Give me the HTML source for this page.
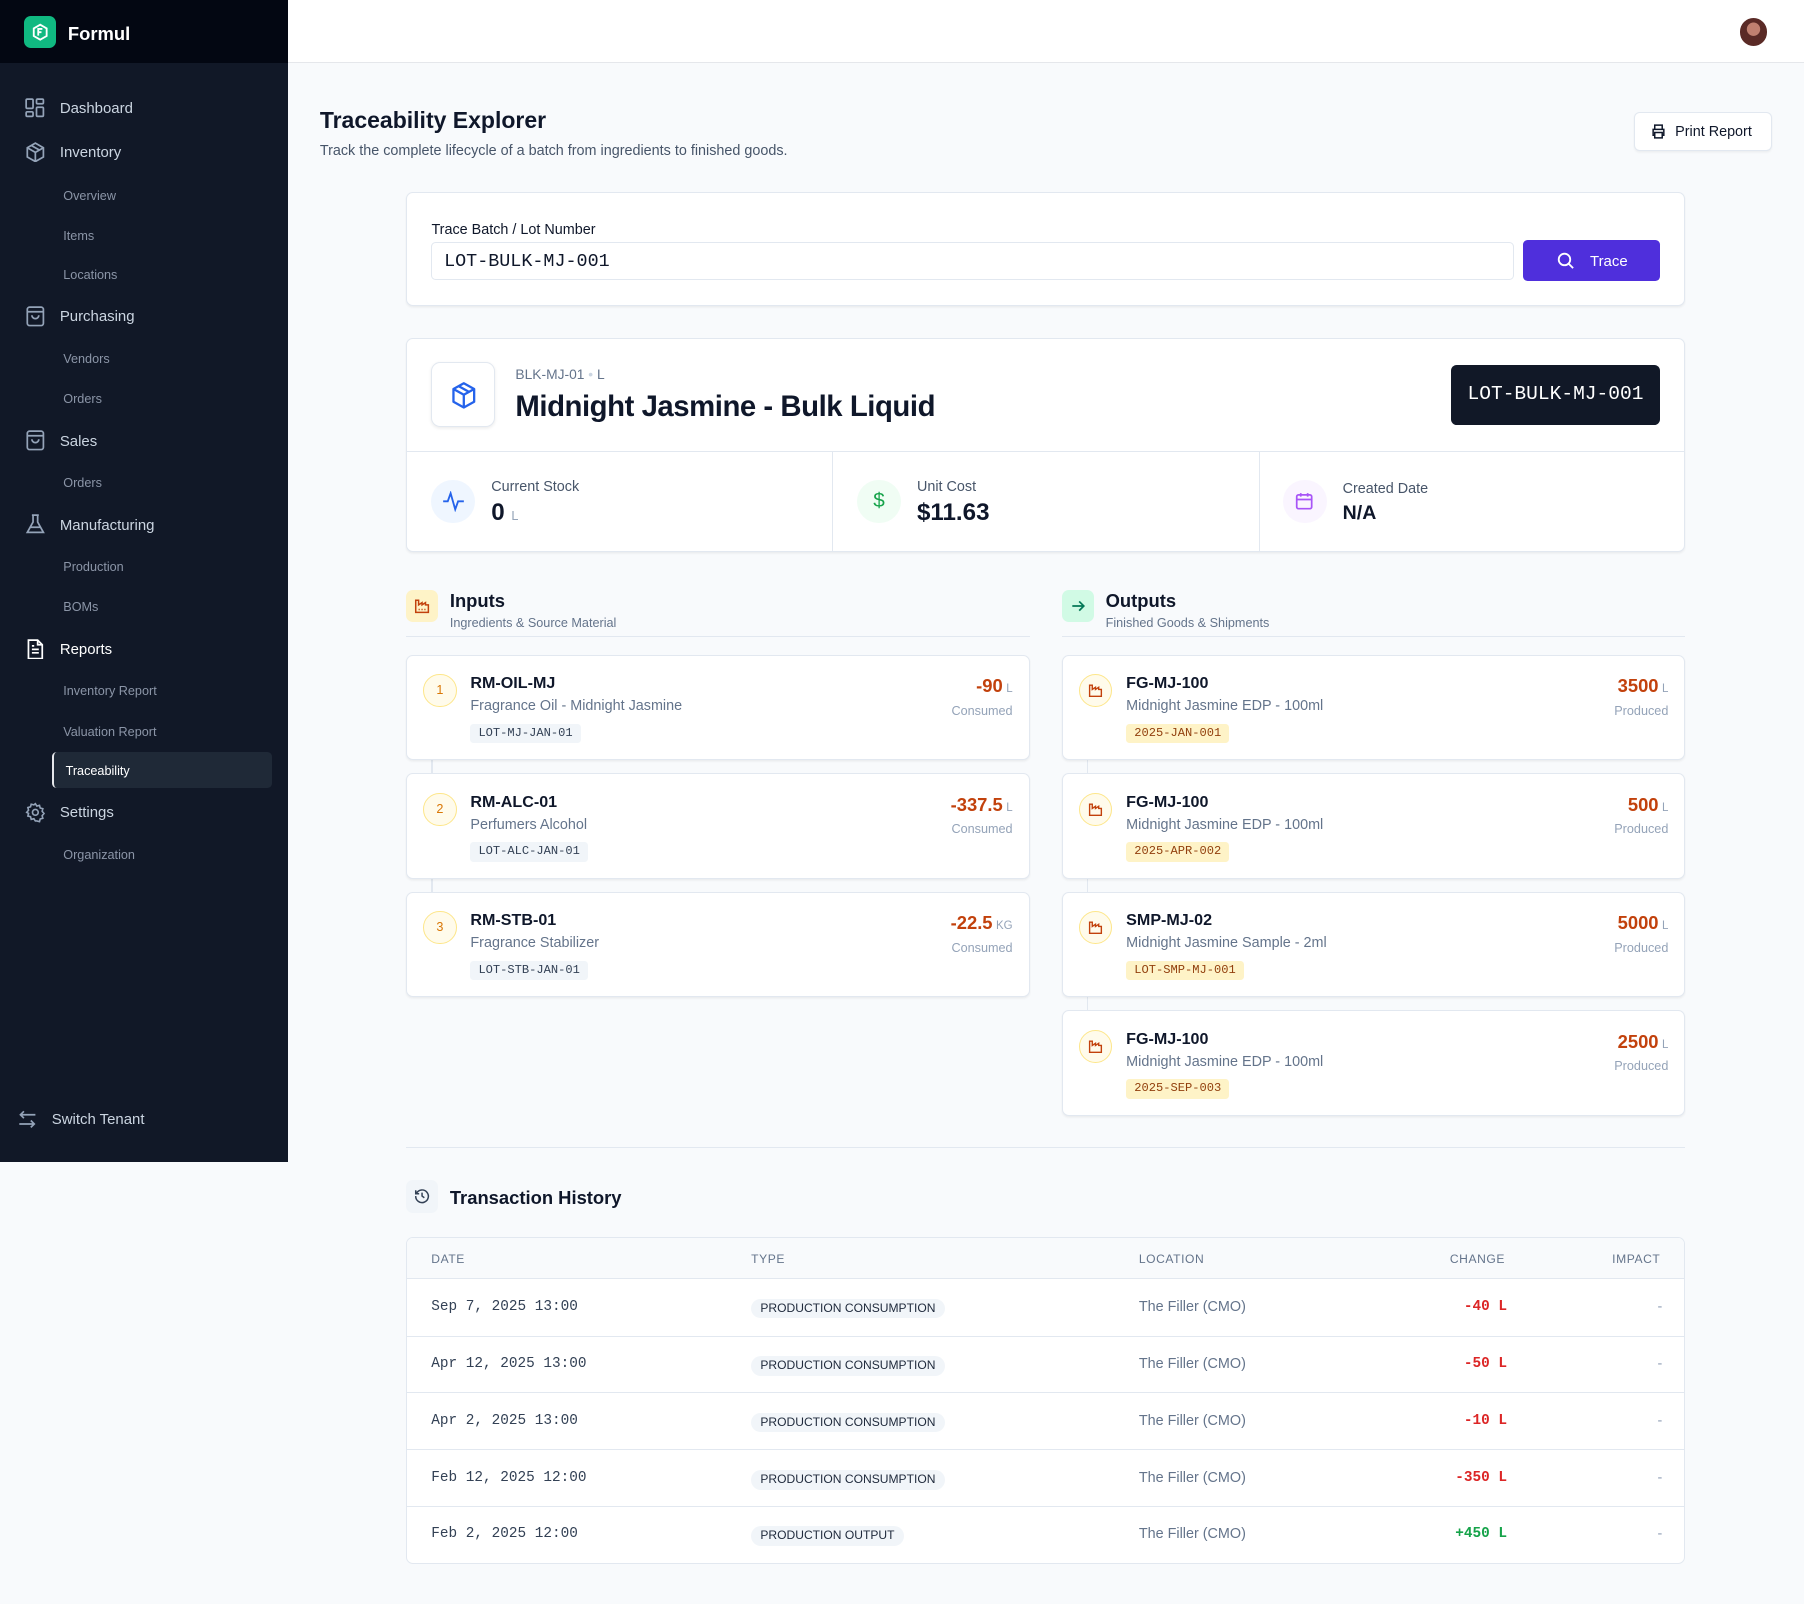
<!DOCTYPE html>
<html><head><meta charset="utf-8"><style>
*{box-sizing:border-box;margin:0;padding:0}
html,body{width:1804px;height:1604px;overflow:hidden;background:#f8fafc}
#root{zoom:1.15051;position:relative;width:1568px;height:1394px;font-family:"Liberation Sans",sans-serif;color:#0f172a;background:#f8fafc}
.a{position:absolute;white-space:nowrap}
.mono{font-family:"Liberation Mono",monospace}
.sb{position:absolute;left:0;top:0;width:250px;height:1010px;background:#111827}
.sbt{position:absolute;left:0;top:0;width:250px;height:55px;background:#030712}
.nav{position:absolute;left:52px;font-size:13px;color:#cbd5e1;line-height:16px}
.sub{position:absolute;left:55px;font-size:11px;color:#8b95a7;line-height:14px}
.ic{position:absolute;left:22px;width:18px;height:18px}
.card{position:absolute;background:#fff;border:1px solid #e2e8f0;border-radius:6px;box-shadow:0 1px 2px rgba(0,0,0,.06)}
.num{position:absolute;left:14px;top:16px;width:29px;height:29px;border-radius:50%;background:#fffbeb;border:1px solid #fde68a;color:#d97706;font-size:11px;text-align:center;line-height:27px}
.code{position:absolute;left:55px;top:16px;font-size:14px;font-weight:bold;color:#0f172a}
.nm{position:absolute;left:55px;top:37px;font-size:12.5px;color:#64748b}
.lot{position:absolute;left:55px;top:59px;height:17px;padding:0 7px;border-radius:3px;background:#f1f5f9;font-size:10.5px;line-height:17px;color:#334155;font-family:"Liberation Mono",monospace}
.lot.y{background:#fef3c7;color:#92400e}
.qty{position:absolute;right:14px;top:17px;font-size:16px;font-weight:bold;color:#c2410c}
.qty span{font-size:10px;font-weight:normal;color:#94a3b8;margin-left:3px}
.st{position:absolute;right:14px;top:42px;font-size:11px;color:#94a3b8}
.vl{position:absolute;width:1px;background:#e2e8f0}
.row{position:absolute;left:0;width:1112px;height:50px;border-top:1px solid #e2e8f0;font-size:12.5px}
.row .d{position:absolute;left:21px;top:17px;font-family:"Liberation Mono",monospace;color:#334155;font-size:12.5px}
.row .t{position:absolute;left:299px;top:17px;height:17px;padding:0 8px;border-radius:9px;background:#f1f5f9;font-size:10.5px;line-height:17px;color:#1e293b}
.row .l{position:absolute;left:636px;top:17px;color:#64748b}
.row .c{position:absolute;right:156px;top:17px;font-family:"Liberation Mono",monospace;font-weight:bold;color:#dc2626}
.row .i{position:absolute;right:21px;top:17px;color:#94a3b8}
.th{position:absolute;top:12px;font-size:10.5px;color:#64748b;letter-spacing:.5px}
</style></head><body><div id="root">

<div class="sb"></div><div class="sbt"></div>
<div class="a" style="left:21px;top:14px;width:28px;height:28px;border-radius:6px;background:#10b981"></div>
<svg class="a" style="left:27px;top:20px" width="16" height="16" viewBox="0 0 16 16" fill="none" stroke="#fff" stroke-width="1.6"><path d="M8 1.5l5.6 3.2v6.6L8 14.5l-5.6-3.2V4.7z"/><path d="M6.3 11V5.2h3.6M6.3 8h2.8"/></svg>
<div class="a" style="left:59px;top:20px;font-size:16px;font-weight:bold;color:#fff">Formul</div>

<svg class="ic" style="top:85px" viewBox="0 0 18 18" fill="none" stroke="#94a3b8" stroke-width="1.5"><rect x="1" y="1" width="6" height="8" rx="1"/><rect x="10" y="1" width="6" height="4" rx="1"/><rect x="10" y="8" width="6" height="8" rx="1"/><rect x="1" y="12" width="6" height="4" rx="1"/></svg>
<div class="nav" style="top:87px">Dashboard</div>
<svg class="ic" style="top:123px" viewBox="0 0 18 18" fill="none" stroke="#94a3b8" stroke-width="1.5"><path d="M9 1l7 4v8l-7 4-7-4V5z"/><path d="M2 5l7 4 7-4M9 9v8M5.5 3l7 4"/></svg>
<div class="nav" style="top:125px">Inventory</div>
<div class="sub" style="top:163px">Overview</div>
<div class="sub" style="top:198px">Items</div>
<div class="sub" style="top:232px">Locations</div>
<svg class="ic" style="top:266px" viewBox="0 0 18 18" fill="none" stroke="#94a3b8" stroke-width="1.5"><rect x="2" y="1" width="14" height="16" rx="2"/><path d="M2 5h14M6 8a3 3 0 006 0"/></svg>
<div class="nav" style="top:268px">Purchasing</div>
<div class="sub" style="top:305px">Vendors</div>
<div class="sub" style="top:340px">Orders</div>
<svg class="ic" style="top:374px" viewBox="0 0 18 18" fill="none" stroke="#94a3b8" stroke-width="1.5"><rect x="2" y="1" width="14" height="16" rx="2"/><path d="M2 5h14M6 8a3 3 0 006 0"/></svg>
<div class="nav" style="top:376px">Sales</div>
<div class="sub" style="top:413px">Orders</div>
<svg class="ic" style="top:447px" viewBox="0 0 18 18" fill="none" stroke="#94a3b8" stroke-width="1.5"><path d="M6 1h6M7 1v6L2 16h14L11 7V1M4.5 11.5h9"/></svg>
<div class="nav" style="top:449px">Manufacturing</div>
<div class="sub" style="top:486px">Production</div>
<div class="sub" style="top:521px">BOMs</div>
<svg class="ic" style="top:555px" viewBox="0 0 18 18" fill="none" stroke="#fff" stroke-width="1.5"><path d="M3 1h8l4 4v12H3z"/><path d="M11 1v4h4M6 9h6M6 12h6M6 6h2"/></svg>
<div class="nav" style="top:557px;color:#fff">Reports</div>
<div class="sub" style="top:594px">Inventory Report</div>
<div class="sub" style="top:629px">Valuation Report</div>
<div class="a" style="left:45px;top:654px;width:191px;height:31px;background:#1f2937;border-radius:4px;border-left:2px solid #e5e7eb"></div>
<div class="sub" style="top:663px;left:57px;color:#fff">Traceability</div>
<svg class="ic" style="top:697px" viewBox="0 0 18 18" fill="none" stroke="#94a3b8" stroke-width="1.4"><circle cx="9" cy="9" r="2.5"/><path d="M9 1.5l1.3 2 2.3-.6.6 2.3 2.3.6-.6 2.3 1.6 1.9-1.6 1.9.6 2.3-2.3.6-.6 2.3-2.3-.6L9 16.5l-1.3-2-2.3.6-.6-2.3-2.3-.6.6-2.3L1.5 9l1.6-1.9-.6-2.3 2.3-.6.6-2.3 2.3.6z"/></svg>
<div class="nav" style="top:699px">Settings</div>
<div class="sub" style="top:736px">Organization</div>
<svg class="a" style="left:15px;top:964px" width="18" height="18" viewBox="0 0 18 18" fill="none" stroke="#94a3b8" stroke-width="1.5"><path d="M16 5H3M6 2L3 5l3 3M2 13h13M12 10l3 3-3 3"/></svg>
<div class="a" style="left:45px;top:966px;font-size:13px;color:#cbd5e1">Switch Tenant</div>

<div class="a" style="left:250px;top:0;width:1318px;height:55px;background:#fff;border-bottom:1px solid #e5e7eb"></div>
<div class="a" style="left:1512px;top:16px;width:24px;height:24px;border-radius:50%;background:radial-gradient(circle at 50% 40%,#c08070 0 30%,#5a2a26 32%)"></div>

<div class="a" style="left:278px;top:93px;font-size:20px;font-weight:bold;color:#0f172a">Traceability Explorer</div>
<div class="a" style="left:278px;top:124px;font-size:12.5px;color:#475569">Track the complete lifecycle of a batch from ingredients to finished goods.</div>
<div class="a" style="left:1420px;top:97px;width:120px;height:34px;background:#fff;border:1px solid #e2e8f0;border-radius:5px;box-shadow:0 1px 2px rgba(0,0,0,.05)"></div>
<svg class="a" style="left:1435px;top:108px" width="13" height="13" viewBox="0 0 14 14" fill="none" stroke="#0f172a" stroke-width="1.4"><path d="M3.5 5V1h7v4M3.5 10.5H2V5h10v5.5h-1.5M3.5 8h7v5h-7z"/></svg>
<div class="a" style="left:1456px;top:108px;font-size:12.5px;color:#0f172a">Print Report</div>

<div class="card" style="left:353px;top:167px;width:1112px;height:99px"></div>
<div class="a" style="left:375px;top:193px;font-size:12.5px;color:#0f172a">Trace Batch / Lot Number</div>
<div class="a" style="left:375px;top:210px;width:941px;height:33px;background:#fff;border:1px solid #e2e8f0;border-radius:4px"></div>
<div class="a mono" style="left:386px;top:218px;font-size:16px;color:#0f172a">LOT-BULK-MJ-001</div>
<div class="a" style="left:1324px;top:209px;width:119px;height:35px;background:#4f2fdc;border-radius:4px"></div>
<svg class="a" style="left:1353px;top:219px" width="15" height="15" viewBox="0 0 15 15" fill="none" stroke="#fff" stroke-width="1.6"><circle cx="6.5" cy="6.5" r="5"/><path d="M10.2 10.2L14 14"/></svg>
<div class="a" style="left:1382px;top:220px;font-size:13px;color:#fff">Trace</div>

<div class="card" style="left:353px;top:294px;width:1112px;height:186px"></div>
<div class="a" style="left:354px;top:392px;width:1110px;height:1px;background:#e2e8f0"></div>
<div class="vl" style="left:723px;top:392px;height:88px"></div>
<div class="vl" style="left:1094px;top:392px;height:88px"></div>
<div class="a" style="left:375px;top:315px;width:55px;height:56px;background:#fff;border:1px solid #e2e8f0;border-radius:8px;box-shadow:0 1px 3px rgba(0,0,0,.08)"></div>
<svg class="a" style="left:391px;top:331px" width="24" height="25" viewBox="0 0 24 25" fill="none" stroke="#2563eb" stroke-width="2" stroke-linejoin="round"><path d="M12 2l9 5v11l-9 5-9-5V7z"/><path d="M3 7l9 5 9-5M12 12v11M7.5 4.5l9 5"/></svg>
<div class="a" style="left:448px;top:319px;font-size:12px;color:#64748b">BLK-MJ-01 <span style="color:#cbd5e1">•</span> L</div>
<div class="a" style="left:448px;top:339px;font-size:25.5px;font-weight:bold;color:#0f172a;letter-spacing:-.4px">Midnight Jasmine - Bulk Liquid</div>
<div class="a" style="left:1261px;top:317px;width:182px;height:52px;background:#111827;border-radius:5px"></div>
<div class="a mono" style="left:1261px;top:333px;width:182px;text-align:center;font-size:17px;color:#fff">LOT-BULK-MJ-001</div>

<div class="a" style="left:375px;top:417px;width:38px;height:38px;border-radius:50%;background:#eff6ff"></div>
<svg class="a" style="left:384px;top:427px" width="20" height="18" viewBox="0 0 20 18" fill="none" stroke="#2563eb" stroke-width="1.6"><path d="M1 9h4l2.5-7 4 14 2.5-7h5"/></svg>
<div class="a" style="left:427px;top:416px;font-size:12.5px;color:#475569">Current Stock</div>
<div class="a" style="left:427px;top:434px;font-size:21px;font-weight:bold;color:#0f172a">0 <span style="font-size:11px;font-weight:normal;color:#94a3b8">L</span></div>
<div class="a" style="left:745px;top:417px;width:38px;height:38px;border-radius:50%;background:#f0fdf4"></div>
<div class="a" style="left:745px;top:425px;width:38px;text-align:center;font-size:18px;color:#16a34a">$</div>
<div class="a" style="left:797px;top:416px;font-size:12.5px;color:#475569">Unit Cost</div>
<div class="a" style="left:797px;top:434px;font-size:21px;font-weight:bold;color:#0f172a">$11.63</div>
<div class="a" style="left:1115px;top:417px;width:38px;height:38px;border-radius:50%;background:#faf5ff"></div>
<svg class="a" style="left:1126px;top:428px" width="16" height="16" viewBox="0 0 16 16" fill="none" stroke="#a855f7" stroke-width="1.5"><rect x="1.5" y="2.5" width="13" height="12" rx="1.5"/><path d="M1.5 6.5h13M5 1v3M11 1v3"/></svg>
<div class="a" style="left:1167px;top:418px;font-size:12.5px;color:#475569">Created Date</div>
<div class="a" style="left:1167px;top:436px;font-size:17px;font-weight:bold;color:#0f172a">N/A</div>

<!-- Inputs -->
<div class="a" style="left:353px;top:513px;width:28px;height:28px;border-radius:6px;background:#fef3c7"></div>
<svg class="a" style="left:360px;top:520px" width="14" height="14" viewBox="0 0 14 14" fill="none" stroke="#c2410c" stroke-width="1.3"><path d="M1.5 12.5V2h2.5v4l3-2v2l3-2v2h2.5v6.5z"/><path d="M4 10h1M6.5 10h1M9 10h1"/></svg>
<div class="a" style="left:391px;top:513px;font-size:16px;font-weight:bold;color:#0f172a">Inputs</div>
<div class="a" style="left:391px;top:535px;font-size:11px;color:#64748b">Ingredients &amp; Source Material</div>
<div class="a" style="left:353px;top:553px;width:542px;height:1px;background:#e2e8f0"></div>
<div class="vl" style="left:375px;top:661px;height:114px"></div>

<div class="card" style="left:353px;top:569px;width:542px;height:92px"><div class="num">1</div><div class="code">RM-OIL-MJ</div><div class="nm">Fragrance Oil - Midnight Jasmine</div><div class="lot">LOT-MJ-JAN-01</div><div class="qty">-90<span>L</span></div><div class="st">Consumed</div></div>
<div class="card" style="left:353px;top:672px;width:542px;height:92px"><div class="num">2</div><div class="code">RM-ALC-01</div><div class="nm">Perfumers Alcohol</div><div class="lot">LOT-ALC-JAN-01</div><div class="qty">-337.5<span>L</span></div><div class="st">Consumed</div></div>
<div class="card" style="left:353px;top:775px;width:542px;height:92px"><div class="num">3</div><div class="code">RM-STB-01</div><div class="nm">Fragrance Stabilizer</div><div class="lot">LOT-STB-JAN-01</div><div class="qty">-22.5<span>KG</span></div><div class="st">Consumed</div></div>

<!-- Outputs -->
<div class="a" style="left:923px;top:513px;width:28px;height:28px;border-radius:6px;background:#d1fae5"></div>
<svg class="a" style="left:930px;top:520px" width="14" height="14" viewBox="0 0 14 14" fill="none" stroke="#047857" stroke-width="1.5"><path d="M2 7h10M8 3l4 4-4 4"/></svg>
<div class="a" style="left:961px;top:513px;font-size:16px;font-weight:bold;color:#0f172a">Outputs</div>
<div class="a" style="left:961px;top:535px;font-size:11px;color:#64748b">Finished Goods &amp; Shipments</div>
<div class="a" style="left:923px;top:553px;width:542px;height:1px;background:#e2e8f0"></div>
<div class="vl" style="left:945px;top:661px;height:217px"></div>

<div class="card" style="left:923px;top:569px;width:542px;height:92px"><div class="num"><svg width="13" height="13" viewBox="0 0 14 14" fill="none" stroke="#c2410c" stroke-width="1.3" style="margin-top:7px"><path d="M1.5 12.5V2h2.5v4l3-2v2l3-2v2h2.5v6.5z"/></svg></div><div class="code">FG-MJ-100</div><div class="nm">Midnight Jasmine EDP - 100ml</div><div class="lot y">2025-JAN-001</div><div class="qty">3500<span>L</span></div><div class="st">Produced</div></div>
<div class="card" style="left:923px;top:672px;width:542px;height:92px"><div class="num"><svg width="13" height="13" viewBox="0 0 14 14" fill="none" stroke="#c2410c" stroke-width="1.3" style="margin-top:7px"><path d="M1.5 12.5V2h2.5v4l3-2v2l3-2v2h2.5v6.5z"/></svg></div><div class="code">FG-MJ-100</div><div class="nm">Midnight Jasmine EDP - 100ml</div><div class="lot y">2025-APR-002</div><div class="qty">500<span>L</span></div><div class="st">Produced</div></div>
<div class="card" style="left:923px;top:775px;width:542px;height:92px"><div class="num"><svg width="13" height="13" viewBox="0 0 14 14" fill="none" stroke="#c2410c" stroke-width="1.3" style="margin-top:7px"><path d="M1.5 12.5V2h2.5v4l3-2v2l3-2v2h2.5v6.5z"/></svg></div><div class="code">SMP-MJ-02</div><div class="nm">Midnight Jasmine Sample - 2ml</div><div class="lot y">LOT-SMP-MJ-001</div><div class="qty">5000<span>L</span></div><div class="st">Produced</div></div>
<div class="card" style="left:923px;top:878px;width:542px;height:92px"><div class="num"><svg width="13" height="13" viewBox="0 0 14 14" fill="none" stroke="#c2410c" stroke-width="1.3" style="margin-top:7px"><path d="M1.5 12.5V2h2.5v4l3-2v2l3-2v2h2.5v6.5z"/></svg></div><div class="code">FG-MJ-100</div><div class="nm">Midnight Jasmine EDP - 100ml</div><div class="lot y">2025-SEP-003</div><div class="qty">2500<span>L</span></div><div class="st">Produced</div></div>

<div class="a" style="left:353px;top:997px;width:1112px;height:1px;background:#e2e8f0"></div>

<div class="a" style="left:353px;top:1026px;width:28px;height:28px;border-radius:6px;background:#f1f5f9"></div>
<svg class="a" style="left:360px;top:1033px" width="14" height="14" viewBox="0 0 14 14" fill="none" stroke="#334155" stroke-width="1.3"><path d="M2.2 4.5A5.5 5.5 0 1 1 1.5 7M1.5 2v3h3M7 4v3l2 1.5"/></svg>
<div class="a" style="left:391px;top:1032px;font-size:16px;font-weight:bold;color:#0f172a">Transaction History</div>

<div class="a" style="left:353px;top:1075px;width:1112px;height:284px;background:#fff;border:1px solid #e2e8f0;border-radius:6px;overflow:hidden">
<div class="a" style="left:0;top:0;width:1112px;height:36px;background:#f8fafc"></div>
<div class="th" style="left:21px">DATE</div><div class="th" style="left:299px">TYPE</div><div class="th" style="left:636px">LOCATION</div><div class="th" style="right:156px">CHANGE</div><div class="th" style="right:21px">IMPACT</div>
<div class="row" style="top:35px"><div class="d">Sep 7, 2025 13:00</div><div class="t">PRODUCTION CONSUMPTION</div><div class="l">The Filler (CMO)</div><div class="c">-40 L</div><div class="i">-</div></div>
<div class="row" style="top:85px"><div class="d">Apr 12, 2025 13:00</div><div class="t">PRODUCTION CONSUMPTION</div><div class="l">The Filler (CMO)</div><div class="c">-50 L</div><div class="i">-</div></div>
<div class="row" style="top:134px"><div class="d">Apr 2, 2025 13:00</div><div class="t">PRODUCTION CONSUMPTION</div><div class="l">The Filler (CMO)</div><div class="c">-10 L</div><div class="i">-</div></div>
<div class="row" style="top:184px"><div class="d">Feb 12, 2025 12:00</div><div class="t">PRODUCTION CONSUMPTION</div><div class="l">The Filler (CMO)</div><div class="c">-350 L</div><div class="i">-</div></div>
<div class="row" style="top:233px"><div class="d">Feb 2, 2025 12:00</div><div class="t">PRODUCTION OUTPUT</div><div class="l">The Filler (CMO)</div><div class="c" style="color:#16a34a">+450 L</div><div class="i">-</div></div>
</div>

</div></body></html>
